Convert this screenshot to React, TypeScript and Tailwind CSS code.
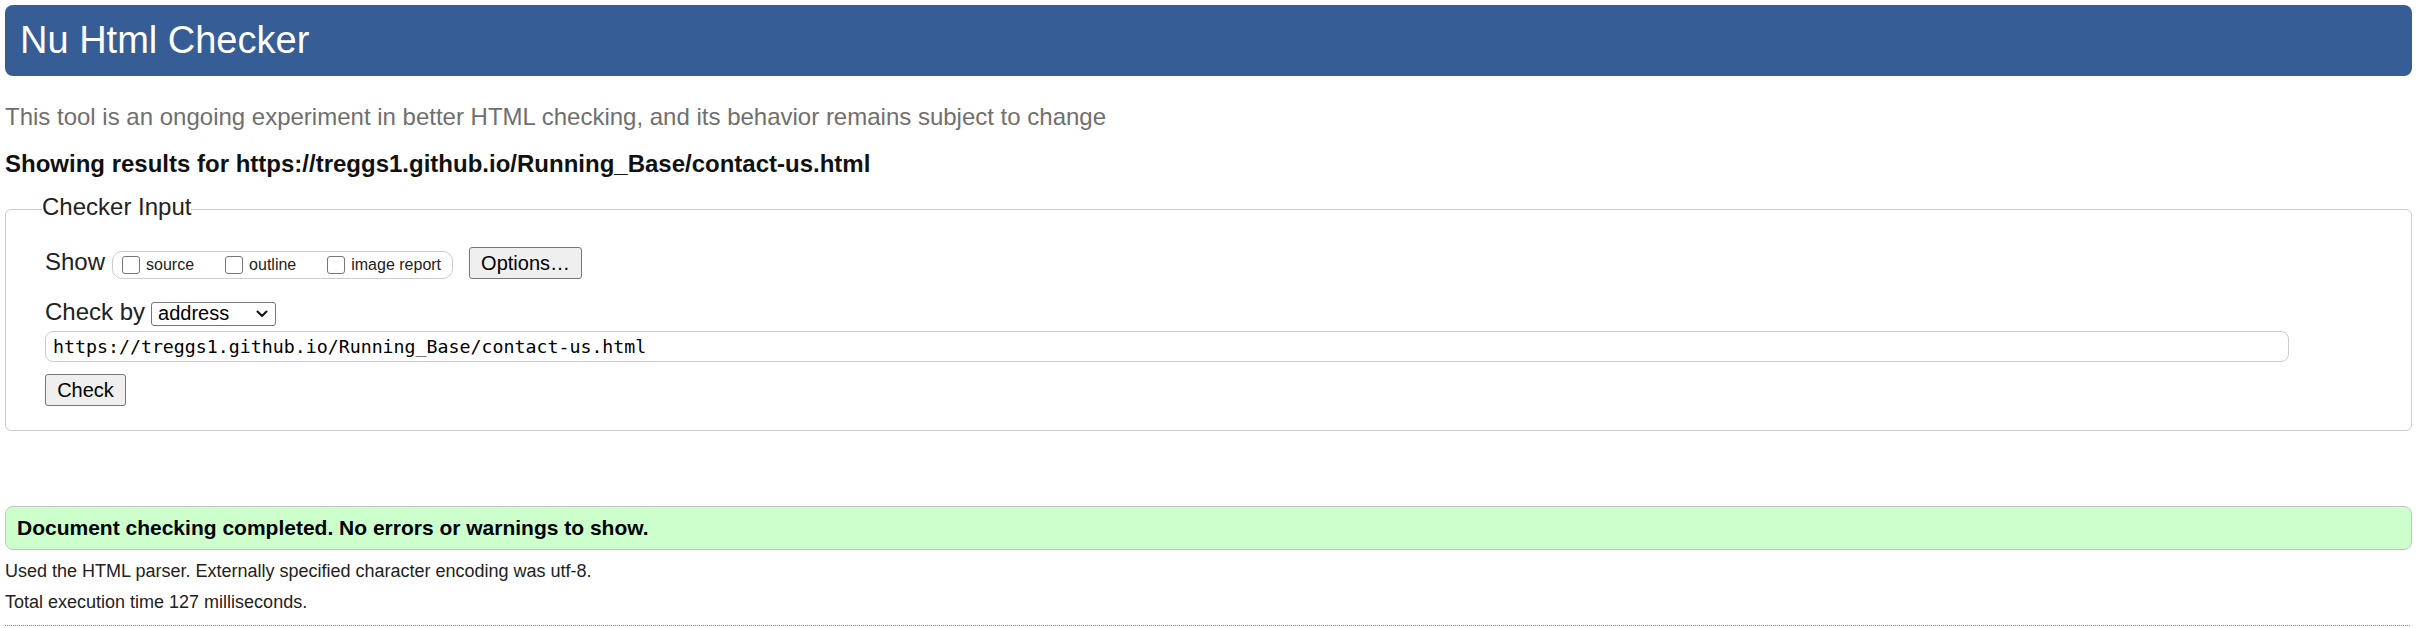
const sans = { fontFamily: '"Liberation Sans", Arial, sans-serif' };

function Checkbox({ label }: { label: string }) {
  return (
    <label className="flex items-baseline">
      <span className="inline-block h-[18px] w-[18px] self-end mb-[1px] rounded-[3px] border border-[#767676] bg-white" />
      <span className="ml-[6px] text-[16px] text-[#222]">{label}</span>
    </label>
  );
}

function Button({ children, className }: { children: string; className: string }) {
  return (
    <button
      type="button"
      className={`flex items-center justify-center rounded-[3px] border border-[#767676] bg-[#efefef] text-[20px] text-black ${className}`}
    >
      {children}
    </button>
  );
}

export default function App() {
  return (
    <div className="min-h-[628px] bg-white pl-[5px] pr-[4px] leading-[normal] text-[#222]" style={sans}>
      <div className="pt-[5px]">
        <h1 className="flex h-[71px] items-center rounded-[8px] bg-[#365d95] pl-[15px] text-[38px] font-normal text-white">
          Nu Html Checker
        </h1>
      </div>

      <p className="mt-[27px] text-[24px] text-[#6f6f6f]">
        This tool is an ongoing experiment in better HTML checking, and its behavior remains subject to change
      </p>
      <p className="mt-[19px] text-[24px] font-bold text-[#111]">
        Showing results for https://treggs1.github.io/Running_Base/contact-us.html
      </p>

      <fieldset className="mt-[15px] rounded-[6px] border border-[#cccccc] pl-[39px] pb-[24px] pt-[22px]">
        <legend className="-ml-[3px] pb-[4px] text-[24px] text-[#222]">Checker Input</legend>

        <div className="flex items-baseline">
          <span className="text-[24px]">Show</span>
          <div className="ml-[7px] flex items-baseline gap-[31px] rounded-[10px] border border-[#cccccc] pl-[9px] pr-[11px] pt-[4px] pb-[3px]">
            <Checkbox label="source" />
            <Checkbox label="outline" />
            <Checkbox label="image report" />
          </div>
          <Button className="ml-[16px] h-[32px] w-[113px]">Options…</Button>
        </div>

        <div className="mt-[19px] flex items-baseline">
          <span className="text-[24px]">Check by</span>
          <div className="ml-[6px] flex h-[24px] w-[125px] items-center justify-between rounded-[3px] border border-[#767676] bg-white pl-[6px] pr-[6px] text-[20px] text-black">
            <span>address</span>
            <svg width="14" height="14" viewBox="0 0 14 14" fill="none">
              <path d="M2.5 4.5 L7 9 L11.5 4.5" stroke="#111" strokeWidth="2" strokeLinecap="round" strokeLinejoin="round" />
            </svg>
          </div>
        </div>

        <div className="mt-[5px] flex h-[31px] w-[2244px] items-center rounded-[8px] border border-[#cccccc] bg-white pl-[7px]">
          <span className="text-[18.25px] text-black" style={{ fontFamily: '"DejaVu Sans Mono", "Liberation Mono", monospace' }}>
            https://treggs1.github.io/Running_Base/contact-us.html
          </span>
        </div>

        <Button className="mt-[12px] h-[32px] w-[81px]">Check</Button>
      </fieldset>

      <div className="mt-[75px] flex h-[44px] items-center rounded-[8px] border border-[#c4c4c4] bg-[#ccffcc] pl-[11px]">
        <p className="text-[21px] font-bold text-black">Document checking completed. No errors or warnings to show.</p>
      </div>

      <p className="mt-[11px] text-[18px] text-[#222]">
        Used the HTML parser. Externally specified character encoding was utf-8.
      </p>
      <p className="mt-[10px] text-[18px] text-[#222]">Total execution time 127 milliseconds.</p>
      <div className="mt-[12px] mr-[2px] border-t border-dotted border-[#888]" />
    </div>
  );
}
